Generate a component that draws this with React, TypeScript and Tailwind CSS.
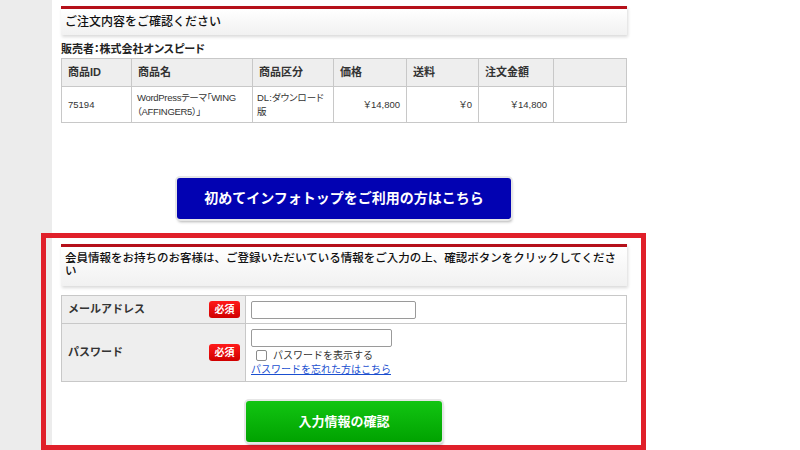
export default function App() {
  return (
    <div className="flex h-[450px] w-[800px] overflow-hidden bg-white text-[#222] font-['Liberation_Sans','Noto_Sans_CJK_JP',sans-serif]">
      <div className="w-[52px] shrink-0 bg-[#ececec]" />
      <div className="ml-[9px] w-[566px] shrink-0 pt-[6px]">
        <SectionHead>ご注文内容をご確認ください</SectionHead>

        <div className="mt-[8px] text-[11px] font-bold leading-[12px] [font-feature-settings:'palt']">販売者：株式会社オンスピード</div>

        <table className="mt-[3px] w-[566px] table-fixed border-collapse text-[9.5px] text-[#333] [font-feature-settings:'palt']">
          <colgroup>
            <col className="w-[70px]" />
            <col className="w-[121px]" />
            <col className="w-[81px]" />
            <col className="w-[73px]" />
            <col className="w-[72px]" />
            <col className="w-[75px]" />
            <col />
          </colgroup>
          <thead>
            <tr className="h-[28px] bg-[#eeeeee]">
              {["商品ID", "商品名", "商品区分", "価格", "送料", "注文金額", ""].map((h, i) => (
                <th key={i} className="border border-[#c8c8c8] px-[6px] text-left text-[11px] font-bold">
                  {h}
                </th>
              ))}
            </tr>
          </thead>
          <tbody>
            <tr className="h-[36px] leading-[14px]">
              <td className="border border-[#c8c8c8] px-[6px]">75194</td>
              <td className="border border-[#c8c8c8] px-[5px] tracking-[-0.3px]">WordPressテーマ「WING（AFFINGER5）」</td>
              <td className="border border-[#c8c8c8] px-[4px]">DL:ダウンロード版</td>
              <td className="border border-[#c8c8c8] px-[6px] text-right">￥14,800</td>
              <td className="border border-[#c8c8c8] px-[6px] text-right">￥0</td>
              <td className="border border-[#c8c8c8] px-[6px] text-right">￥14,800</td>
              <td className="border border-[#c8c8c8]" />
            </tr>
          </tbody>
        </table>

        <div className="mt-[55px] flex justify-center">
          <button className="h-[41px] w-[334px] rounded-[3px] bg-[#0202b2] text-[14px] font-bold text-white shadow-[0_0_0_2px_#e6e6e6,1px_3px_3px_rgba(0,0,0,0.3)]">
            初めてインフォトップをご利用の方はこちら
          </button>
        </div>

        <div className="-ml-[20px] mt-[14px] w-[605px] border-[5px] border-[#e0202a] bg-[linear-gradient(to_right,#ececec_6px,#ffffff_6px)] pb-[3px] pl-[15px] pr-[14px] pt-[6px]">
          <div className="min-h-[42px] border-t-[3px] border-[#b5101a] bg-[linear-gradient(to_bottom,#ffffff,#f1f1f1)] px-[4px] pt-[5px] text-[11.5px] font-medium leading-[13px] text-[#111] shadow-[1px_2px_3px_rgba(0,0,0,0.15)]">
            会員情報をお持ちのお客様は、ご登録いただいている情報をご入力の上、確認ボタンをクリックしてください
          </div>

          <table className="mt-[9px] w-[566px] table-fixed border-collapse text-[10px] text-[#333]">
            <colgroup>
              <col className="w-[184px]" />
              <col />
            </colgroup>
            <tbody>
              <tr className="h-[28px]">
                <LabelCell>メールアドレス</LabelCell>
                <td className="border border-[#c8c8c8] px-[5px]">
                  <div className="h-[18px] w-[165px] rounded-[2px] border border-[#9a9a9a] bg-white" />
                </td>
              </tr>
              <tr className="h-[58px]">
                <LabelCell>パスワード</LabelCell>
                <td className="border border-[#c8c8c8] px-[5px] py-[4px]">
                  <div className="h-[18px] w-[141px] rounded-[2px] border border-[#9a9a9a] bg-white" />
                  <div className="mt-[2px] flex items-center gap-[6px] pl-[5px] leading-[14px]">
                    <span className="h-[11px] w-[11px] rounded-[2px] border border-[#8a8a8a] bg-white" />
                    <span>パスワードを表示する</span>
                  </div>
                  <a className="block leading-[14px] text-[#1a4fd0] underline">パスワードを忘れた方はこちら</a>
                </td>
              </tr>
            </tbody>
          </table>

          <div className="mt-[19px] flex justify-center">
            <button className="h-[41px] w-[196px] rounded-[3px] bg-[linear-gradient(to_bottom,#12c512,#00a200)] text-[13px] font-bold text-white shadow-[0_0_0_2px_#e6e6e6,1px_3px_3px_rgba(0,0,0,0.3)]">
              入力情報の確認
            </button>
          </div>
        </div>
      </div>
    </div>
  );
}

function SectionHead({ children }: { children: React.ReactNode }) {
  return (
    <div className="flex h-[29px] items-center border-t-[3px] border-[#b5101a] bg-[linear-gradient(to_bottom,#ffffff,#f1f1f1)] px-[4px] text-[12px] font-medium leading-[13px] text-[#111] shadow-[1px_2px_3px_rgba(0,0,0,0.15)]">
      {children}
    </div>
  );
}

function LabelCell({ children }: { children: React.ReactNode }) {
  return (
    <td className="border border-[#c8c8c8] bg-[#eeeeee] pl-[6px] pr-[5px]">
      <div className="flex items-center justify-between">
        <span className="text-[11px] font-bold">{children}</span>
        <span className="flex h-[17px] w-[31px] items-center justify-center rounded-[3px] bg-[linear-gradient(to_bottom,#ff1a1a,#d00000)] text-[10px] font-bold text-white">
          必須
        </span>
      </div>
    </td>
  );
}
